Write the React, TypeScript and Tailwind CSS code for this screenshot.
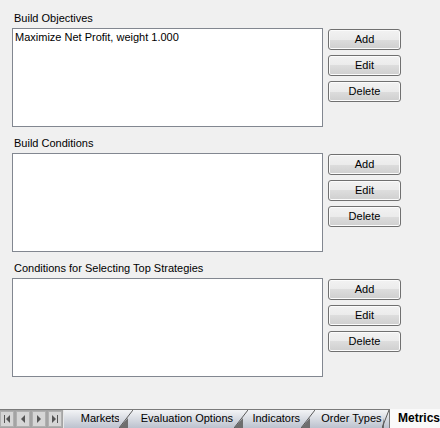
import React from "react";

const font = { fontFamily: '"Liberation Sans", Arial, sans-serif' };

function Btn({ label }: { label: string }) {
  return (
    <div className="w-[73px] h-[21px] rounded-[3px] border border-[#707070] bg-[linear-gradient(to_bottom,#f2f2f2_0%,#ebebeb_50%,#dddddd_50%,#cfcfcf_100%)] shadow-[inset_0_0_0_1px_#fbfbfb] flex items-center justify-center text-[11px] leading-[13px] text-black">
      {label}
    </div>
  );
}

function Section({ title, items }: { title: string; items: string[] }) {
  return (
    <div className="flex flex-col">
      <div className="h-[13px] text-[11px] leading-[13px] text-black pl-[2px]">{title}</div>
      <div className="mt-[3px] flex">
        <div className="w-[311px] h-[99px] border border-[#828790] bg-white pl-[2px] pt-[2px]">
          {items.map((it) => (
            <div key={it} className="text-[11px] leading-[13px] text-black">
              {it}
            </div>
          ))}
        </div>
        <div className="ml-[5px] mt-[1px] flex flex-col gap-[5px]">
          <Btn label="Add" />
          <Btn label="Edit" />
          <Btn label="Delete" />
        </div>
      </div>
    </div>
  );
}

function Sep({ w = 14 }: { w?: number }) {
  return (
    <svg width={w} height={18} className="block shrink-0 bg-[linear-gradient(to_bottom,#f3f4f6,#bcc2ce)]">
      <polygon points={`0,18 ${w - 5},18 ${w - 5},8`} fill="#6e6e6e" />
      <line x1={0} y1={18} x2={w} y2={0} stroke="#5a5a5a" strokeWidth={1} />
    </svg>
  );
}

function NavBtn({ kind }: { kind: "first" | "prev" | "next" | "last" }) {
  return (
    <div className="w-[14px] h-[16px] bg-[#d6d6d6] border border-[#b0b0b0] flex items-center justify-center">
      <svg width="8" height="8" viewBox="0 0 8 8">
        {kind === "first" && (
          <>
            <rect x="1" y="0" width="1" height="8" fill="#555" />
            <polygon points="7,0 7,8 3,4" fill="#555" />
          </>
        )}
        {kind === "prev" && <polygon points="6,0 6,8 2,4" fill="#555" />}
        {kind === "next" && <polygon points="2,0 2,8 6,4" fill="#555" />}
        {kind === "last" && (
          <>
            <polygon points="1,0 1,8 5,4" fill="#555" />
            <rect x="6" y="0" width="1" height="8" fill="#555" />
          </>
        )}
      </svg>
    </div>
  );
}

const tabBg = "bg-[linear-gradient(to_bottom,#f3f4f6,#bcc2ce)]";

export default function App() {
  return (
    <div className="w-[440px] h-[428px] bg-[#f0f0f0] flex flex-col overflow-hidden" style={font}>
      <div className="h-[409px] pt-[12px] pl-[12px] flex flex-col gap-[10px]">
        <Section title="Build Objectives" items={["Maximize Net Profit, weight 1.000"]} />
        <Section title="Build Conditions" items={[]} />
        <Section title="Conditions for Selecting Top Strategies" items={[]} />
      </div>
      <div className="h-[19px] flex border-t border-[#7a7a7a] text-[11px] leading-[16px] text-black">
        <div className="w-[63px] h-[18px] bg-[#a4a4a4] flex items-start gap-[2px] pt-[1px]">
          <NavBtn kind="first" />
          <NavBtn kind="prev" />
          <NavBtn kind="next" />
          <NavBtn kind="last" />
        </div>
        <div className={`w-[56px] h-[18px] pl-[17px] border-l border-[#e8e8e8] ${tabBg}`}>Markets</div>
        <Sep />
        <div className={`w-[102px] h-[18px] pl-[8px] whitespace-nowrap ${tabBg}`}>Evaluation Options</div>
        <Sep />
        <div className={`w-[53px] h-[18px] pl-[4px] ${tabBg}`}>Indicators</div>
        <Sep />
        <div className={`w-[67px] h-[18px] pl-[6px] whitespace-nowrap ${tabBg}`}>Order Types</div>
        <Sep w={7} />
        <div className="flex-1 pl-[8px] border-l border-[#7a7a7a] bg-[#fafafa] font-bold text-[12px] whitespace-nowrap -mt-[1px] h-[19px] pt-[1px]">Metrics</div>
      </div>
    </div>
  );
}
